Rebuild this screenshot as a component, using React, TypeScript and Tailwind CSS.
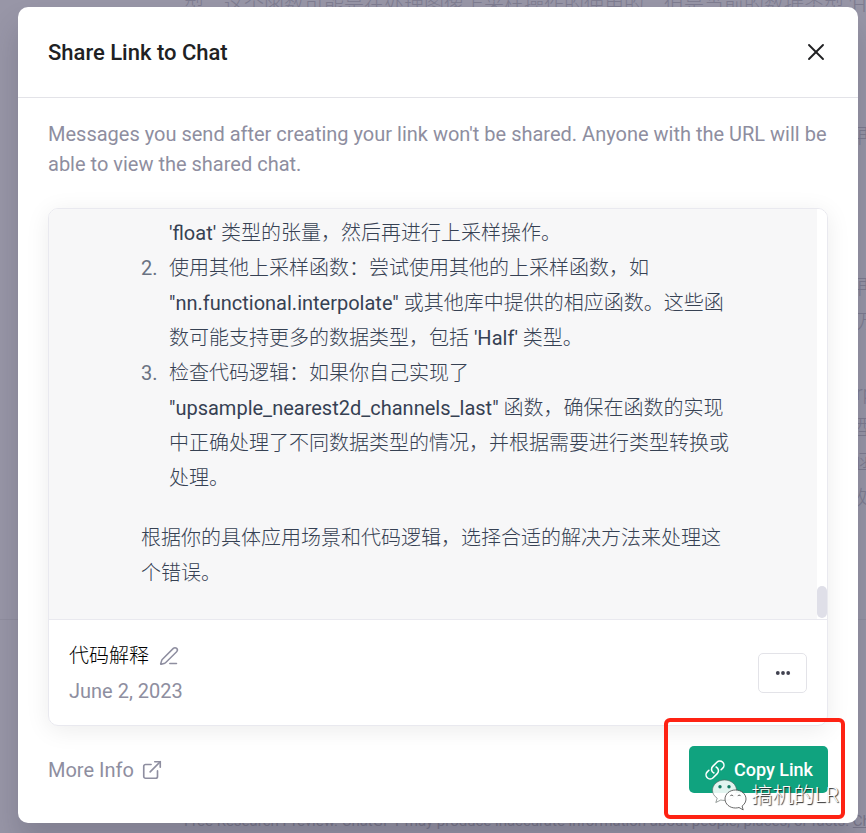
import type { ReactNode } from "react";
import { ExternalLink, PenLine, X } from "lucide-react";

function LinkIcon() {
  return (
    <svg
      viewBox="0 0 24 24"
      fill="none"
      stroke="currentColor"
      strokeWidth="1.7"
      strokeLinecap="round"
      strokeLinejoin="round"
      className="size-[22px] shrink-0"
    >
      <path d="M13.19 8.688a4.5 4.5 0 0 1 1.242 7.244l-4.5 4.5a4.5 4.5 0 0 1-6.364-6.364l1.757-1.757m13.35-.622 1.757-1.757a4.5 4.5 0 0 0-6.364-6.364l-4.5 4.5a4.5 4.5 0 0 0 1.242 7.244" />
    </svg>
  );
}

function DotsIcon() {
  return (
    <svg viewBox="0 0 16 16" fill="currentColor" className="size-4">
      <circle cx="2.8" cy="8" r="1.9" />
      <circle cx="8" cy="8" r="1.9" />
      <circle cx="13.2" cy="8" r="1.9" />
    </svg>
  );
}

function WeChatIcon() {
  return (
    <svg viewBox="0 0 36 32" className="h-8 w-9 shrink-0">
      <path
        d="M12.500 1C6 1 .5 5.500 .5 11.200c0 3.300 1.800 6.100 4.700 8l-1.400 4.300 5-2.500c1.200.3 2.400.4 3.700.4 6.600 0 12-4.500 12-10.200S19.100 1 12.500 1z"
        fill="#fff"
        fillOpacity=".88"
        stroke="#55605d"
        strokeWidth=".6"
      />
      <circle cx="8" cy="7.800" r="1.700" fill="#147a62" />
      <circle cx="17" cy="7.800" r="1.700" fill="#147a62" />
      <path
        d="M23.500 11c-5.900 0-10.500 4-10.500 9s4.600 9 10.500 9c1.200 0 2.400-.2 3.500-.5l4.200 2.400-1.100-3.900c2.400-1.700 3.900-4.200 3.900-7 0-5-4.600-9-10.500-9z"
        fill="#fff"
        fillOpacity=".92"
        stroke="#444"
        strokeWidth=".8"
      />
      <path
        d="M18.300 17.100a1.500 1.500 0 0 1 2.800 0M25.800 17.100a1.500 1.500 0 0 1 2.800 0"
        fill="none"
        stroke="#444"
        strokeWidth=".9"
      />
    </svg>
  );
}

function ListItem({ marker, children }: { marker?: string; children: ReactNode }) {
  return (
    <li className="flex">
      <span className="w-7 shrink-0 font-normal text-gray-500">{marker}</span>
      <div className="min-w-0 flex-1">{children}</div>
    </li>
  );
}

// Chinese text is set light, the Latin words in it keep the regular weight
function Latin({ children }: { children: ReactNode }) {
  return <span className="font-normal">{children}</span>;
}

// The dimmed conversation that stays behind the dialog
function Backdrop() {
  return (
    <div
      aria-hidden="true"
      className="absolute inset-0 flex flex-col justify-between overflow-hidden text-[20px] leading-[35px] font-light whitespace-nowrap text-[#7e7c90]"
    >
      <div className="flex h-[620px] flex-col border-b border-[#908e9f]">
        <p className="-mt-3 pl-[184px]">
          型，这个函数可能是在处理图像上采样操作的使用的，但是当前的数据类型 'Half'
        </p>
        <div className="mt-24 w-[10px] self-end">
          <p>再</p>
          <p className="mt-[116px]">再</p>
          <p>万</p>
          <p className="mt-9">rp</p>
          <p>型。</p>
          <p>函</p>
          <p>处</p>
        </div>
      </div>
      <p className="pl-[184px] text-[15px] leading-6 font-normal text-[#7a788b]">
        Free Research Preview. ChatGPT may produce inaccurate information about
        people, places, or facts. <span className="underline">ChatGPT May 24 Version</span>
      </p>
    </div>
  );
}

export default function App() {
  return (
    <div
      lang="zh-CN"
      className="relative flex min-h-screen items-start bg-[#9896a7] pt-[7px] pr-2 pb-[10px] pl-[18px] font-['Roboto','Noto_Sans_CJK_SC',sans-serif] text-[20px]"
    >
      <Backdrop />

      <div
        role="dialog"
        aria-labelledby="share-title"
        className="relative w-full rounded-[10px] bg-white shadow-[0_20px_30px_rgba(40,38,60,0.2)]"
      >
        <div className="flex h-[91px] items-center justify-between border-b border-[#e3e3e8] pr-7 pl-[30px]">
          <h2 id="share-title" className="text-[22px] font-medium text-[#202123]">
            Share Link to Chat
          </h2>
          <button type="button" aria-label="Close" className="text-[#202123]">
            <X size={28} strokeWidth={1.6} />
          </button>
        </div>

        <div className="px-[30px] pt-[21px] pb-[30px]">
          <p className="leading-[30px] text-[#8e8ea0]">
            Messages you send after creating your link won't be shared. Anyone
            with the URL will be able to view the shared chat.
          </p>

          <div className="mt-[29px] overflow-hidden rounded-[10px] border border-[#e9e9ef] shadow-[0_4px_24px_rgba(0,0,0,0.08)]">
            <div className="flex border-b border-[#e9e9ef]">
              <div className="min-w-0 flex-1 bg-[#f7f7f8] pt-[7px] pb-7 pl-[6px] leading-[35px] font-light text-gray-700">
                <div className="mx-auto max-w-[590px]">
                  <ol>
                    <ListItem>
                      <Latin>'float'</Latin> 类型的张量，然后再进行上采样操作。
                    </ListItem>
                    <ListItem marker="2.">
                      使用其他上采样函数：尝试使用其他的上采样函数，如{" "}
                      <Latin>"nn.functional.interpolate"</Latin>{" "}
                      或其他库中提供的相应函数。这些函数可能支持更多的数据类型，包括{" "}
                      <Latin>'Half'</Latin> 类型。
                    </ListItem>
                    <ListItem marker="3.">
                      检查代码逻辑：如果你自己实现了{" "}
                      <Latin>"upsample_nearest2d_channels_last"</Latin>{" "}
                      函数，确保在函数的实现中正确处理了不同数据类型的情况，并根据需要进行类型转换或处理。
                    </ListItem>
                  </ol>
                  <p className="mt-[25px]">
                    根据你的具体应用场景和代码逻辑，选择合适的解决方法来处理这个错误。
                  </p>
                </div>
              </div>
              <div className="flex w-[10px] flex-col justify-end bg-white">
                <div className="mb-px h-8 rounded-full bg-[#dfdfe8]" />
              </div>
            </div>

            <div className="flex h-[105px] items-center justify-between px-5">
              <div className="pt-[2px] leading-[35px]">
                <div className="flex items-center gap-[10px] text-black">
                  <span className="font-light">代码解释</span>
                  <button type="button" aria-label="Rename" className="text-[#8e8ea0]">
                    <PenLine size={20} strokeWidth={1.8} />
                  </button>
                </div>
                <p className="text-[#8e8ea0]">June 2, 2023</p>
              </div>
              <button
                type="button"
                aria-label="More options"
                className="flex h-10 w-[49px] items-center justify-center rounded-[5px] border border-[#e3e3e8] text-[#40414f]"
              >
                <DotsIcon />
              </button>
            </div>
          </div>

          <div className="mt-5 flex items-center justify-between">
            <a href="#more-info" className="flex items-center gap-[7px] text-[#8e8ea0]">
              More Info
              <ExternalLink size={22} strokeWidth={1.8} />
            </a>

            <div className="relative">
              <button
                type="button"
                className="flex h-[47px] w-[139px] items-center gap-2 rounded-[5px] bg-[#10a37f] pl-[15px] text-[18px] font-medium text-white"
              >
                <LinkIcon />
                Copy Link
              </button>
              <div className="pointer-events-none absolute -top-7 -right-[17px] h-[101px] w-[181px] rounded-[6px] border-4 border-[#fe2213]" />
              <div className="pointer-events-none absolute top-[33px] -right-[11px] flex items-center gap-1 text-[21px] leading-8 font-light whitespace-nowrap text-white [text-shadow:1px_1px_1px_#222]">
                <WeChatIcon />
                搞机的LR
              </div>
            </div>
          </div>
        </div>
      </div>
    </div>
  );
}
